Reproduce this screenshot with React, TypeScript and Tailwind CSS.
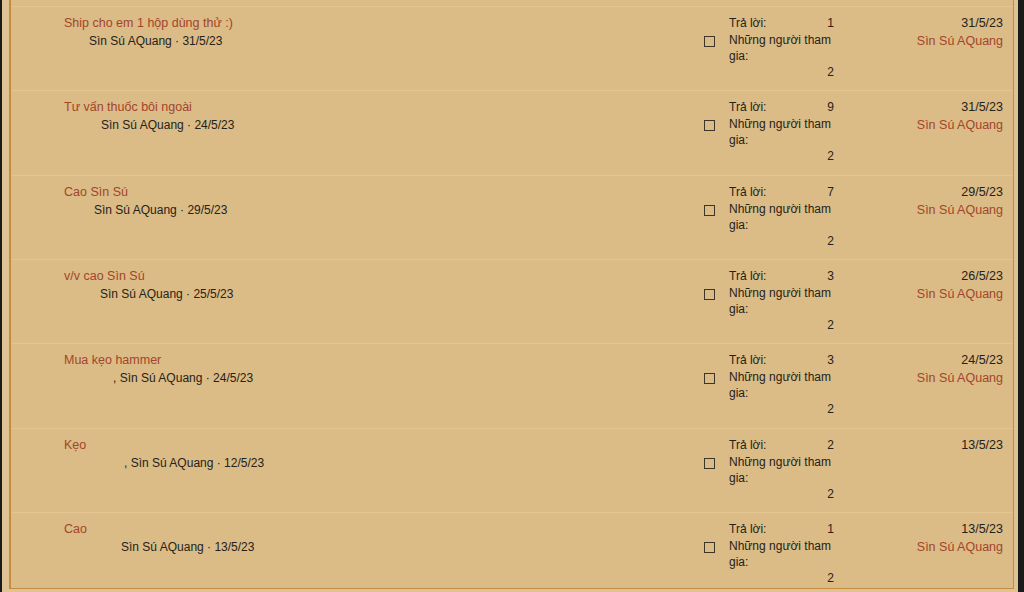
import React from "react";

interface Thread {
  title: string;
  starter: string;
  indent: string;
  replies: number;
  members: number;
  lastDate: string;
  lastUser?: string;
}

const threads: Thread[] = [
  { title: "Ship cho em 1 hộp dùng thử :)", starter: "Sìn Sú AQuang · 31/5/23", indent: "pl-[25px]", replies: 1, members: 2, lastDate: "31/5/23", lastUser: "Sìn Sú AQuang" },
  { title: "Tư vấn thuốc bôi ngoài", starter: "Sìn Sú AQuang · 24/5/23", indent: "pl-[37px]", replies: 9, members: 2, lastDate: "31/5/23", lastUser: "Sìn Sú AQuang" },
  { title: "Cao Sìn Sú", starter: "Sìn Sú AQuang · 29/5/23", indent: "pl-[30px]", replies: 7, members: 2, lastDate: "29/5/23", lastUser: "Sìn Sú AQuang" },
  { title: "v/v cao Sìn Sú", starter: "Sìn Sú AQuang · 25/5/23", indent: "pl-[36px]", replies: 3, members: 2, lastDate: "26/5/23", lastUser: "Sìn Sú AQuang" },
  { title: "Mua kẹo hammer", starter: ", Sìn Sú AQuang · 24/5/23", indent: "pl-[49px]", replies: 3, members: 2, lastDate: "24/5/23", lastUser: "Sìn Sú AQuang" },
  { title: "Kẹo", starter: ", Sìn Sú AQuang · 12/5/23", indent: "pl-[60px]", replies: 2, members: 2, lastDate: "13/5/23" },
  { title: "Cao", starter: "Sìn Sú AQuang · 13/5/23", indent: "pl-[57px]", replies: 1, members: 2, lastDate: "13/5/23", lastUser: "Sìn Sú AQuang" },
];

function ThreadRow({ t }: { t: Thread }) {
  return (
    <div className="flex h-[84.33px] shrink-0 border-t border-[#e6c690] pt-[7px]">
      <div className="flex-1 pl-[53px]">
        <div className="text-[12.5px] leading-[18px] text-[#a3452b]">{t.title}</div>
        <div className={`text-[12px] leading-[18px] text-[#262219] ${t.indent}`}>{t.starter}</div>
      </div>
      <div className="flex w-[25px] pt-[22px]">
        <div className="h-[11px] w-[11px] border border-[#3d3528]" />
      </div>
      <div className="w-[106px] text-[12px] text-[#262219]">
        <div className="flex h-[18px] items-center justify-between">
          <span>Trả lời:</span>
          <span className="pr-[1px]">{t.replies}</span>
        </div>
        <div className="w-[104px] leading-[16px]">Những người tham gia:</div>
        <div className="h-[16px] pr-[1px] pt-[1px] text-right leading-[15px]">{t.members}</div>
      </div>
      <div className="w-[178px] pr-[10px] text-right text-[12.5px]">
        <div className="leading-[18px] text-[#262219]">{t.lastDate}</div>
        {t.lastUser && <div className="leading-[18px] text-[#a3452b]">{t.lastUser}</div>}
      </div>
    </div>
  );
}

export default function App() {
  return (
    <div className="h-[592px] w-[1024px] overflow-hidden bg-[#1b1b1b] pl-[2px] pr-[6px] font-['Liberation_Sans',Arial,sans-serif]">
      <div className="flex h-full flex-col bg-[#dfc394] pl-[7px] pr-[4px]">
        <div className="flex h-[589px] shrink-0 flex-col overflow-hidden border-x border-b border-l-2 border-[#c88a3e] bg-[#dbbb86]">
          <div className="h-[6px] shrink-0" />
          {threads.map((t, i) => (
            <ThreadRow key={i} t={t} />
          ))}
        </div>
      </div>
    </div>
  );
}
